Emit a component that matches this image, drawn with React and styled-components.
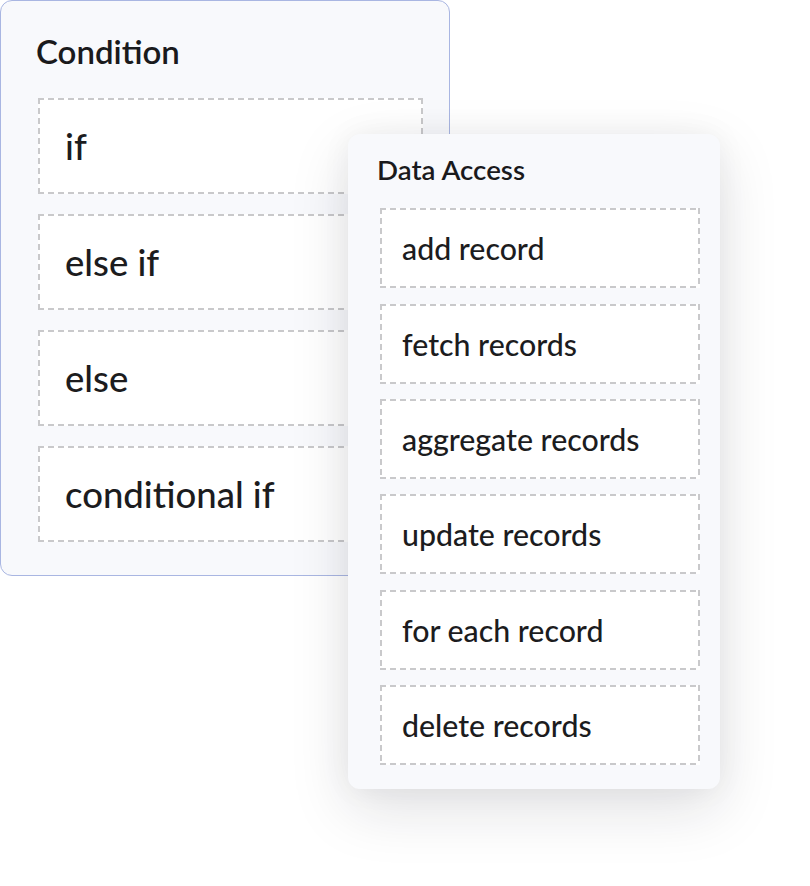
import React from "react";
import styled, { createGlobalStyle } from "styled-components";

const Global = createGlobalStyle`
  html, body { margin: 0; padding: 0; background: #ffffff; }
  body { font-family: Lato, "Noto Sans", sans-serif; color: #1c1c1e; }
`;

const Canvas = styled.div`
  position: relative;
  width: 810px;
  height: 886px;
  overflow: hidden;
  background: #ffffff;
`;

const Panel = styled.section`
  position: absolute;
  left: ${(p) => p.$left}px;
  top: ${(p) => p.$top}px;
  width: ${(p) => p.$width}px;
  box-sizing: border-box;
  display: flex;
  flex-direction: column;
  background: #f8f9fc;
  border-radius: 12px;
`;

const ConditionPanel = styled(Panel)`
  height: 576px;
  border: 1.5px solid #a9b6e2;
  padding: 31px 24px 0 37px;
`;

const DataPanel = styled(Panel)`
  height: 655px;
  padding: 19px 20px 0 32px;
  box-shadow: 0 20px 60px rgba(20, 24, 40, 0.13), 0 0 30px rgba(20, 24, 40, 0.05);
`;

const Title = styled.h2`
  margin: 0;
  font-weight: 600;
  font-size: ${(p) => p.$size}px;
  line-height: 1.2;
  color: #1a1a1c;
  margin-left: ${(p) => p.$indent || 0}px;
`;

const List = styled.div`
  display: flex;
  flex-direction: column;
  gap: ${(p) => p.$gap}px;
  margin-top: ${(p) => p.$top}px;
`;

const dash = "#c9c9cb";

const Slot = styled.div`
  box-sizing: border-box;
  height: ${(p) => p.$h}px;
  width: ${(p) => p.$w}px;
  display: flex;
  align-items: center;
  padding-left: ${(p) => p.$pad}px;
  background-color: #ffffff;
  background-image:
    repeating-linear-gradient(90deg, ${dash} 0 6px, transparent 6px 10px),
    repeating-linear-gradient(90deg, ${dash} 0 6px, transparent 6px 10px),
    repeating-linear-gradient(180deg, ${dash} 0 6px, transparent 6px 10px),
    repeating-linear-gradient(180deg, ${dash} 0 6px, transparent 6px 10px);
  background-size: 100% 2px, 100% 2px, 2px 100%, 2px 100%;
  background-position: left top, left bottom, left top, right top;
  background-repeat: no-repeat;
  font-size: ${(p) => p.$fs}px;
  font-weight: 500;
  color: #1c1c1e;
`;

const conditions = ["if", "else if", "else", "conditional if"];
const dataAccess = [
  "add record",
  "fetch records",
  "aggregate records",
  "update records",
  "for each record",
  "delete records",
];

export default function App() {
  return (
    <Canvas>
      <Global />
      <ConditionPanel $left={0} $top={0} $width={450}>
        <Title $size={33} $indent={-2}>Condition</Title>
        <List $gap={20} $top={26}>
          {conditions.map((c) => (
            <Slot key={c} $h={96} $w={385} $fs={36.5} $pad={27}>
              {c}
            </Slot>
          ))}
        </List>
      </ConditionPanel>
      <DataPanel $left={348} $top={134} $width={372}>
        <Title $size={27.7} $indent={-3}>Data Access</Title>
        <List $gap={15.4} $top={22}>
          {dataAccess.map((d) => (
            <Slot key={d} $h={80} $w={320} $fs={30.3} $pad={22}>
              {d}
            </Slot>
          ))}
        </List>
      </DataPanel>
    </Canvas>
  );
}
